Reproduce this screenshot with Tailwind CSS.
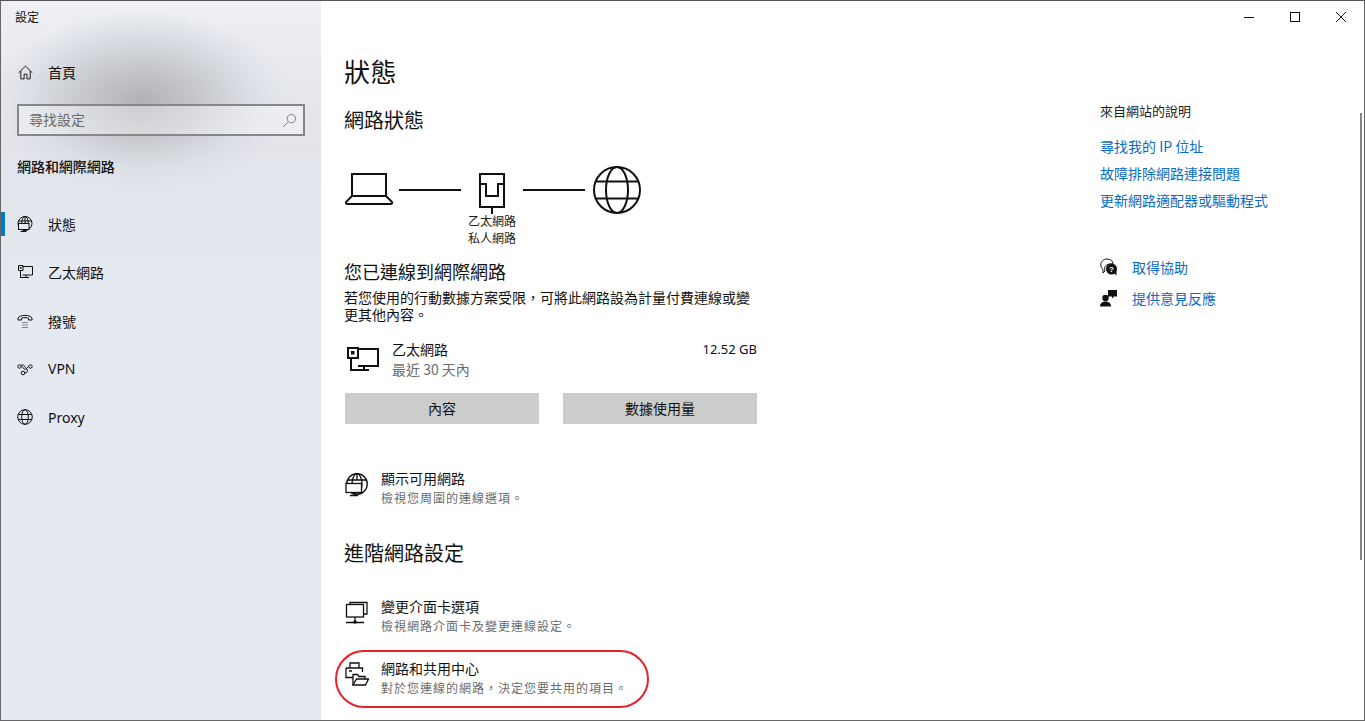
<!DOCTYPE html>
<html lang="zh-Hant">
<head>
<meta charset="utf-8">
<script src="https://cdn.jsdelivr.net/npm/@tailwindcss/browser@4"></script>
</head>
<body class="m-0 overflow-hidden bg-white font-['Noto_Sans_CJK_TC','Noto_Sans',sans-serif] text-[#111]">
<div class="relative flex h-[721px] w-[1365px] border border-[#666] border-t-[#555] bg-white overflow-hidden">

  <!-- Sidebar -->
  <aside class="flex h-full w-[320px] shrink-0 flex-col bg-[#e5eaf2] bg-[radial-gradient(ellipse_150px_90px_at_140px_100px,#b0b2b6_0%,#c4c6ca_35%,#dcdfe5_75%,transparent_100%),linear-gradient(180deg,#eef0f3_0%,#e2e4ea_20%,#e5eaf2_45%)]">
    <div class="flex h-[33px] items-center pl-[14px] pb-[2px] text-[12px] leading-none">設定</div>
    <div class="flex h-[48px] items-center mt-[14px] pl-[17px]">
      <svg class="h-[15px] w-[15px]" viewBox="0 0 16 16" fill="none" stroke="#111" stroke-width="1"><path d="M.8 8.200 8 1.200l7.200 7M3 6.500v8.300h3.500v-5h3v5H13V6.500"/></svg>
      <span class="ml-[15px] text-[14px] leading-none">首頁</span>
    </div>
    <div class="ml-[16px] mt-[8px] flex h-[32px] w-[288px] items-center justify-between border-2 border-[#85878a] bg-white/35 pl-[10px] pr-[6px] text-[14px] text-[#6b6b6b]">
      <span class="-mt-[2px] leading-none">尋找設定</span>
      <svg class="h-[15px] w-[15px]" viewBox="0 0 16 16" fill="none" stroke="#777" stroke-width="1"><circle cx="10" cy="6" r="4.500"/><path d="M6.700 9.300 1 15"/></svg>
    </div>
    <div class="ml-[16px] mt-[20px] text-[14px] leading-[20px] font-medium tracking-[-0.05px]">網路和網際網路</div>

    <nav class="mt-[24px] flex flex-col">
      <div class="relative flex h-[48.25px] items-center pl-[16px]">
        <span class="absolute left-0 top-[12px] h-[24px] w-[4px] bg-[#0078d4]"></span>
        <svg class="h-[16px] w-[16px]" viewBox="0 0 16 16" fill="none" stroke="#111" stroke-width="1"><circle cx="8" cy="7.500" r="7"/><ellipse cx="8" cy="7.500" rx="3.300" ry="7"/><path d="M1 5h14M8 .5V7"/><rect x="1.500" y="7.500" width="10.500" height="6" fill="#e5eaf2"/><path d="M6.500 13.500v2M3.500 15.500h6"/></svg>
        <span class="ml-[15px] text-[14px] leading-none">狀態</span>
      </div>
      <div class="flex h-[48.25px] items-center pl-[16px]">
        <svg class="h-[16px] w-[16px]" viewBox="0 0 16 16" fill="none" stroke="#111" stroke-width="1"><path d="M5.500 2.500H15.500V11H5.500M1.500 1.500h4.500V6.500H1.500zM3.500 6.500v7M3 13.500h9M9 11v2.500"/><rect x="2.800" y="3" width="1.700" height="1.700" fill="#111" stroke="none"/></svg>
        <span class="ml-[15px] text-[14px] leading-none">乙太網路</span>
      </div>
      <div class="flex h-[48.25px] items-center pl-[16px]">
        <svg class="h-[16px] w-[16px]" viewBox="0 0 16 16" fill="none" stroke="#111" stroke-width="1"><path d="M1 7V5c2-3.500 12-3.500 14 0v2h-3.500V5.200c-2-.8-5-.8-7 0V7z"/><path d="M5.500 9.500h1M7.500 9.500h1M9.500 9.500h1M5.500 12h1M7.500 12h1M9.500 12h1M5.500 14.500h1M7.500 14.500h1M9.500 14.500h1" stroke-width=".9"/></svg>
        <span class="ml-[15px] text-[14px] leading-none">撥號</span>
      </div>
      <div class="flex h-[48.25px] items-center pl-[16px]">
        <svg class="h-[16px] w-[16px]" viewBox="0 0 16 16" fill="none" stroke="#111" stroke-width="1"><circle cx="2.500" cy="5.500" r="1.700"/><circle cx="13.500" cy="5.500" r="1.700"/><circle cx="6" cy="12" r="1.800"/><path d="M4.500 5.500c1.500 0 1.500 2 2.500 2.500 1.500.7 3-.5 3.500-1.500s1-1 1.200-1M7.800 12c2 0 3-1 2.500-3S7.500 6 7 4.500C6.700 3.800 5.500 3.500 4 4.500"/></svg>
        <span class="ml-[15px] mt-[1px] text-[14px] leading-none font-['Noto_Sans']">VPN</span>
      </div>
      <div class="flex h-[48.25px] items-center pl-[16px]">
        <svg class="h-[16px] w-[16px]" viewBox="0 0 16 16" fill="none" stroke="#111" stroke-width="1"><circle cx="8" cy="8" r="7.300"/><ellipse cx="8" cy="8" rx="3.300" ry="7.300"/><path d="M1.200 5.500h13.600M1.200 10.500h13.600"/></svg>
        <span class="ml-[15px] mt-[1px] text-[14px] leading-none font-['Noto_Sans']">Proxy</span>
      </div>
    </nav>
  </aside>

  <!-- Main -->
  <main class="flex h-full w-[736px] shrink-0 flex-col pl-[24px]">
    <h1 class="-ml-px mt-[52px] text-[26px] leading-[36px] font-normal tracking-[0.5px]">狀態</h1>
    <h2 class="-ml-px mt-[17px] text-[20px] leading-[28px] font-normal">網路狀態</h2>

    <div class="mt-[32px] flex items-start">
      <svg class="h-[48px] w-[50px] shrink-0" viewBox="0 0 50 48" fill="none" stroke="#111" stroke-width="2"><path d="M7 30V8h34v22M7 30 1 36c-.6 1 0 2 1 2h44c1 0 1.600-1 1-2l-6-6z"/></svg>
      <div class="ml-[4px] mt-[23px] h-[2px] w-[62px] bg-[#111]"></div>
      <div class="flex w-[62px] flex-col items-center">
        <svg class="h-[48px] w-[26px]" viewBox="0 0 26 48" fill="none" stroke="#111" stroke-width="2"><path d="M1 8h24v33H1zM1 18h6v12h12V18h6M13 41v7"/></svg>
      </div>
      <div class="mt-[23px] h-[2px] w-[62px] bg-[#111]"></div>
      <svg class="ml-[8px] h-[48px] w-[48px] shrink-0" viewBox="0 0 48 48" fill="none" stroke="#111" stroke-width="2"><circle cx="24" cy="24" r="23"/><ellipse cx="24" cy="24" rx="11" ry="23"/><path d="M3 15.500h42M3 32.500h42"/></svg>
    </div>
    <div class="ml-[112px] -mt-[2px] w-[70px] text-center text-[12px] leading-[17px] text-[#222]">乙太網路<br>私人網路</div>

    <h3 class="-ml-px mt-[13px] text-[18px] leading-[24px] font-normal">您已連線到網際網路</h3>
    <p class="-ml-px mt-[6px] w-[412px] text-[14px] leading-[17px]">若您使用的行動數據方案受限，可將此網路設為計量付費連線或變更其他內容。</p>

    <div class="mt-[16px] flex w-[412px] items-start">
      <svg class="ml-[2px] mt-[8px] h-[25px] w-[32px] shrink-0" viewBox="0 0 32 25" fill="none" stroke="#111" stroke-width="2"><path d="M11 2h20v17H11M1 1h10v10H1zM4 11v13M4 23h18M17 19v4"/><rect x="4" y="4" width="3.500" height="3.500" fill="#111" stroke="none"/></svg>
      <div class="ml-[13px] flex flex-1 flex-col">
        <div class="flex justify-between text-[14px] leading-[20px]"><span>乙太網路</span><span class="font-['Noto_Sans'] text-[13px]">12.52 GB</span></div>
        <div class="text-[14px] leading-[20px] text-[#6b6b6b]">最近 30 天內</div>
      </div>
    </div>

    <div class="mt-[14px] flex w-[412px] justify-between">
      <div class="flex h-[31px] w-[194px] items-center justify-center bg-[#cccccc] text-[14px]">內容</div>
      <div class="flex h-[31px] w-[194px] items-center justify-center bg-[#cccccc] text-[14px]">數據使用量</div>
    </div>

    <div class="mt-[44px] flex items-start">
      <svg class="mt-[5px] h-[24px] w-[24px] shrink-0" viewBox="0 0 24 24" fill="none" stroke="#111" stroke-width="1.300"><circle cx="12" cy="11" r="10.300"/><ellipse cx="12" cy="11" rx="5" ry="10.300"/><path d="M2.500 7h19M12 1v6"/><rect x="1" y="10.500" width="15.500" height="9" fill="#fff"/><path d="M9 19.500v3M5 22.500h8"/></svg>
      <div class="ml-[12px]">
        <div class="text-[14px] leading-[20px]">顯示可用網路</div>
        <div class="text-[12px] leading-[20px] tracking-[1px] text-[#6b6b6b]">檢視您周圍的連線選項。</div>
      </div>
    </div>

    <h2 class="-ml-px mt-[31px] text-[20px] leading-[28px] font-normal">進階網路設定</h2>

    <div class="mt-[29px] flex items-start">
      <svg class="mt-[5px] h-[24px] w-[24px] shrink-0" viewBox="0 0 24 24" fill="none" stroke="#111" stroke-width="1.300"><path d="M5 3.500V1.500h17V13h-3"/><rect x="1.500" y="3.500" width="17" height="12.500" fill="#fff"/><path d="M10 16v5M1 21.500h18"/><rect x="8.500" y="19.500" width="3" height="3" fill="#111" stroke="none"/></svg>
      <div class="ml-[12px]">
        <div class="text-[14px] leading-[20px]">變更介面卡選項</div>
        <div class="text-[12px] leading-[20px] tracking-[1px] text-[#6b6b6b]">檢視網路介面卡及變更連線設定。</div>
      </div>
    </div>

    <div class="mt-[22px] flex items-start">
      <svg class="mt-[4px] h-[24px] w-[24px] shrink-0" viewBox="0 0 24 24" fill="none" stroke="#111" stroke-width="1.300"><path d="M5 6V1h9v5M1 6h16.500v4M8 15.500H1V6M4 9h3"/><path d="M8 23V12.500h4.500l1.300 2H20v3"/><path d="M8 23h12.500l3-6H11.500z" fill="#fff"/></svg>
      <div class="ml-[12px]">
        <div class="text-[14px] leading-[20px]">網路和共用中心</div>
        <div class="text-[12px] leading-[20px] tracking-[1px] text-[#6b6b6b]">對於您連線的網路，決定您要共用的項目。</div>
      </div>
    </div>
  </main>

  <!-- Right column -->
  <section class="flex flex-1 flex-col pl-[43px]">
    <div class="mt-[100px] text-[13px] leading-[20px] text-[#222]">來自網站的說明</div>
    <a class="mt-[15px] text-[14px] leading-[20px] text-[#0a6cc4]">尋找我的 IP 位址</a>
    <a class="mt-[7px] text-[14px] leading-[20px] text-[#0a6cc4]">故障排除網路連接問題</a>
    <a class="mt-[7px] text-[14px] leading-[20px] text-[#0a6cc4]">更新網路適配器或驅動程式</a>
    <div class="mt-[47px] flex items-center">
      <svg class="h-[18px] w-[18px]" viewBox="0 0 18 18"><path d="M7 1c3.500 0 6 2 6 5H9a5 5 0 0 0-4 7l-2 2v-3.500C1.500 10.500 0.800 8.500 0.800 7 .8 3.500 3.500 1 7 1z" fill="none" stroke="#111" stroke-width="1"/><circle cx="11.500" cy="11" r="5.500" fill="#111"/><path d="M14 15l2.500 2.500L16.500 13z" fill="#111"/><text x="11.500" y="14" text-anchor="middle" font-size="8" font-weight="700" fill="#fff" font-family="Liberation Sans">?</text></svg>
      <span class="ml-[14px] text-[14px] leading-[20px] text-[#0a6cc4]">取得協助</span>
    </div>
    <div class="mt-[11px] flex items-center">
      <svg class="h-[18px] w-[18px]" viewBox="0 0 18 18" fill="#111"><circle cx="5.500" cy="9" r="3.200"/><path d="M0 17.500c0-3.500 2.500-5 5.500-5s5.500 1.500 5.500 5z"/><path d="M8 1h9v6.500h-3l-2 2v-2H8z"/></svg>
      <span class="ml-[14px] text-[14px] leading-[20px] text-[#0a6cc4]">提供意見反應</span>
    </div>
  </section>

  <!-- Window controls -->
  <div class="absolute right-0 top-0 flex h-[32px]">
    <div class="flex h-[32px] w-[46px] items-center justify-center"><svg class="h-[10px] w-[10px]" viewBox="0 0 10 10" stroke="#111" stroke-width="1"><path d="M0 5.500h10"/></svg></div>
    <div class="flex h-[32px] w-[46px] items-center justify-center"><svg class="h-[10px] w-[10px]" viewBox="0 0 10 10" fill="none" stroke="#111" stroke-width="1"><rect x=".5" y=".5" width="9" height="9"/></svg></div>
    <div class="flex h-[32px] w-[46px] items-center justify-center"><svg class="h-[10px] w-[10px]" viewBox="0 0 10 10" stroke="#111" stroke-width="1"><path d="M0 0l10 10M10 0 0 10"/></svg></div>
  </div>

  <!-- Scrollbar -->
  <div class="absolute right-[2px] top-[112px] h-[447px] w-[2px] bg-[#858585]"></div>

  <!-- Red annotation -->
  <div class="absolute left-[334px] top-[649px] h-[58px] w-[314px] rounded-[30px] border-2 border-[#e8202e]"></div>
</div>
</body>
</html>
